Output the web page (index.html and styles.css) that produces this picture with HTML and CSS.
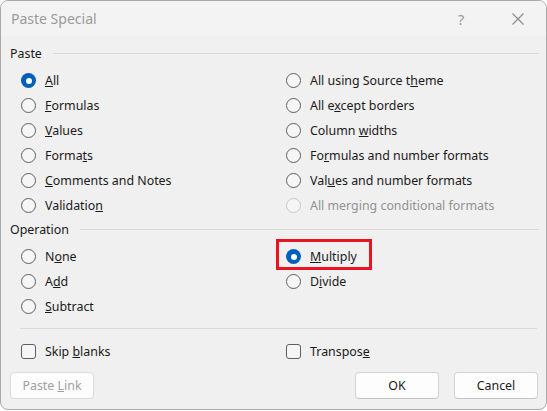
FILE: index.html
```html
<!DOCTYPE html>
<html>
<head>
<meta charset="utf-8">
<link rel="stylesheet" href="styles.css">
</head>
<body>
<div class="window">
  <div class="titlebar">
    <span class="title">Paste Special</span>
    <span class="help">?</span>
    <svg class="close" width="12" height="12" viewBox="0 0 12 12"><path d="M0.5 0.5 L11.5 11.5 M11.5 0.5 L0.5 11.5" stroke="#8a8a8a" stroke-width="1.1" fill="none"/></svg>
  </div>
  <div class="content">
    <div class="group-header"><span>Paste</span><span class="rule"></span></div>
    <div class="options">
      <label class="opt"><span class="radio checked"></span><span><u>A</u>ll</span></label>
      <label class="opt"><span class="radio"></span><span>All using Source t<u>h</u>eme</span></label>
      <label class="opt"><span class="radio"></span><span><u>F</u>ormulas</span></label>
      <label class="opt"><span class="radio"></span><span>All e<u>x</u>cept borders</span></label>
      <label class="opt"><span class="radio"></span><span><u>V</u>alues</span></label>
      <label class="opt"><span class="radio"></span><span>Column <u>w</u>idths</span></label>
      <label class="opt"><span class="radio"></span><span>Forma<u>t</u>s</span></label>
      <label class="opt"><span class="radio"></span><span>Fo<u>r</u>mulas and number formats</span></label>
      <label class="opt"><span class="radio"></span><span><u>C</u>omments and Notes</span></label>
      <label class="opt"><span class="radio"></span><span>Val<u>u</u>es and number formats</span></label>
      <label class="opt"><span class="radio"></span><span>Validatio<u>n</u></span></label>
      <label class="opt disabled"><span class="radio"></span><span>All mer<u>g</u>ing conditional formats</span></label>
    </div>
    <div class="group-header op"><span>Operation</span><span class="rule"></span></div>
    <div class="options op-options">
      <label class="opt"><span class="radio"></span><span>N<u>o</u>ne</span></label>
      <label class="opt highlight"><span class="radio checked"></span><span><u>M</u>ultiply</span></label>
      <label class="opt"><span class="radio"></span><span>A<u>d</u>d</span></label>
      <label class="opt"><span class="radio"></span><span>D<u>i</u>vide</span></label>
      <label class="opt"><span class="radio"></span><span><u>S</u>ubtract</span></label>
    </div>
    <div class="separator"></div>
    <div class="options checks">
      <label class="opt"><span class="checkbox"></span><span>Skip <u>b</u>lanks</span></label>
      <label class="opt"><span class="checkbox"></span><span>Transpos<u>e</u></span></label>
    </div>
    <div class="buttons">
      <button class="btn disabled">Paste <u>L</u>ink</button>
      <span class="spacer"></span>
      <button class="btn">OK</button>
      <button class="btn">Cancel</button>
    </div>
  </div>
</div>
</body>
</html>
```
FILE: styles.css
```css
body {
  margin: 0;
  background: #ffffff;
  font-family: "Noto Sans", "Open Sans", sans-serif;
  font-size: 12.4px;
  color: #1a1a1a;
}

.window {
  width: 547px;
  height: 410px;
  box-sizing: border-box;
  border: 1px solid #a9a9a9;
  border-radius: 8px;
  background: #f0f0f0;
  overflow: hidden;
}

.titlebar {
  height: 35px;
  background: #f3f3f3;
  display: flex;
  align-items: center;
  padding-left: 10px;
}

.title {
  flex: 1;
  font-size: 14px;
  color: #9a9a9a;
}

.help {
  width: 14px;
  text-align: center;
  font-size: 15px;
  color: #9a9a9a;
  margin-right: 44px;
}

.close {
  display: block;
  margin-right: 22px;
}

.content {
  padding: 0 7px 0 9px;
}

.group-header {
  display: flex;
  align-items: center;
  height: 16px;
  margin-top: 9px;
}

.group-header.op {
  margin-top: 3px;
}

.group-header .rule {
  flex: 1;
  height: 1px;
  background: #dadada;
  margin-left: 11px;
}

.options {
  display: grid;
  grid-template-columns: 265px 1fr;
  grid-auto-rows: 25px;
  margin: 7px 0 0 11px;
}

.op-options {
  margin-top: 7px;
}

.opt {
  display: flex;
  align-items: center;
  gap: 9px;
  white-space: nowrap;
}

.opt.disabled {
  color: #929292;
}

.radio {
  flex: none;
  width: 15px;
  height: 15px;
  box-sizing: border-box;
  border: 1px solid #5e5e5e;
  border-radius: 50%;
  background: #f6f6f6;
  position: relative;
}

.radio.checked {
  border: none;
  background: #005fb8;
}

.radio.checked::after {
  content: "";
  position: absolute;
  left: 4.5px;
  top: 4.5px;
  width: 6px;
  height: 6px;
  border-radius: 50%;
  background: #ffffff;
}

.opt.disabled .radio {
  border-color: #c8c8c8;
  background: #f5f5f5;
}

.highlight {
  position: relative;
}

.highlight::after {
  content: "";
  position: absolute;
  left: -10px;
  top: -5px;
  width: 96px;
  height: 31px;
  box-sizing: border-box;
  border: 3px solid #e8141f;
}

.separator {
  height: 1px;
  background: #dadada;
  margin: 9px 2px 0 10px;
}

.checks {
  margin-top: 10px;
}

.checkbox {
  flex: none;
  width: 15px;
  height: 15px;
  box-sizing: border-box;
  border: 1px solid #5e5e5e;
  border-radius: 3px;
  background: #f6f6f6;
}

.buttons {
  display: flex;
  gap: 15px;
  margin-top: 8px;
  margin-right: 1px;
}

.spacer {
  flex: 1;
}

.btn {
  width: 84px;
  height: 27px;
  box-sizing: border-box;
  border: 1px solid #d3d3d3;
  border-bottom-color: #c4c4c4;
  border-radius: 4px;
  background: #fdfdfd;
  font-family: inherit;
  font-size: 12.4px;
  color: #1a1a1a;
  padding: 0;
}

.btn.disabled {
  color: #a0a0a0;
  border-color: #dcdcdc;
}
```
